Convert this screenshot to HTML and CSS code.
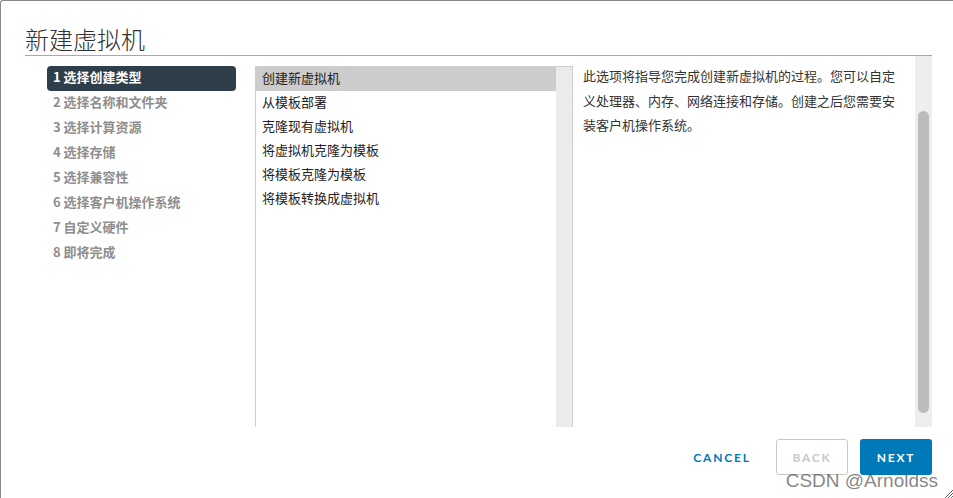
FILE: index.html
```html
<!DOCTYPE html>
<html lang="zh-CN">
<head>
    <meta charset="UTF-8">
    <title>新建虚拟机</title>
    <link rel="stylesheet" href="styles.css">
</head>
<body>
    <div class="wizard">
        <header class="wizard-header">
            <h1>新建虚拟机</h1>
        </header>
        <div class="wizard-body">
            <div class="wizard-content">
                <ul class="steps">
                    <li class="active">1 选择创建类型</li>
                    <li>2 选择名称和文件夹</li>
                    <li>3 选择计算资源</li>
                    <li>4 选择存储</li>
                    <li>5 选择兼容性</li>
                    <li>6 选择客户机操作系统</li>
                    <li>7 自定义硬件</li>
                    <li>8 即将完成</li>
                </ul>
                <div class="type-list">
                    <ul class="options">
                        <li class="selected">创建新虚拟机</li>
                        <li>从模板部署</li>
                        <li>克隆现有虚拟机</li>
                        <li>将虚拟机克隆为模板</li>
                        <li>将模板克隆为模板</li>
                        <li>将模板转换成虚拟机</li>
                    </ul>
                    <div class="list-track"></div>
                </div>
                <p class="desc">此选项将指导您完成创建新虚拟机的过程。您可以自定义处理器、内存、网络连接和存储。创建之后您需要安装客户机操作系统。</p>
            </div>
            <div class="scroll-track"><div class="scroll-thumb"></div></div>
        </div>
        <footer class="wizard-footer">
            <button class="btn btn-link">Cancel</button>
            <button class="btn btn-outline" disabled>Back</button>
            <button class="btn btn-primary">Next</button>
        </footer>
        <span class="watermark">CSDN @Arnoldss</span>
        <svg class="grip" width="9" height="9" viewBox="0 0 9 9">
            <path d="M9 1 L1 9 M9 4 L4 9 M9 7 L7 9" stroke="#666" stroke-width="1"/>
        </svg>
    </div>
</body>
</html>
```

FILE: styles.css
```css
body {
    margin: 0;
    background: #fff;
    font-family: "Noto Sans CJK SC", "Noto Sans", sans-serif;
    color: #333;
}
.wizard {
    position: relative;
    width: 953px;
    height: 498px;
    box-sizing: border-box;
    border-top: 1px solid #8a8a8a;
    border-left: 1px solid #8a8a8a;
    border-top-left-radius: 3px;
    padding: 0 21px 0 24px;
    overflow: hidden;
}
.wizard-header {
    padding-top: 22px;
    border-bottom: 1px solid #a8a8a8;
}
.wizard-header h1 {
    margin: 0;
    font-size: 24px;
    line-height: 32px;
    font-weight: 300;
    color: #313131;
}
.wizard-body {
    display: flex;
    height: 371px;
    overflow: hidden;
}
.wizard-content {
    flex: 1;
    display: flex;
    padding-top: 10px;
}
.steps {
    list-style: none;
    margin: 0 0 0 22px;
    padding: 0;
    width: 189px;
    align-self: flex-start;
}
.steps li {
    height: 25px;
    line-height: 22px;
    padding-left: 6px;
    font-size: 13px;
    font-weight: bold;
    color: #8e8e8e;
    border-radius: 4px;
}
.steps li.active {
    background: #2e3f4b;
    color: #fff;
}
.type-list {
    display: flex;
    width: 318px;
    box-sizing: border-box;
    margin-left: 19px;
    border: 1px solid #cfcfcf;
    border-bottom: none;
}
.options {
    flex: 1;
    list-style: none;
    margin: 0;
    padding: 0;
}
.options li {
    height: 24px;
    line-height: 22px;
    padding-left: 6px;
    font-size: 13px;
    color: #222;
}
.options li.selected {
    background: #cccccc;
}
.list-track {
    width: 16px;
    background: #ebebeb;
}
.desc {
    width: 320px;
    margin: -2px 0 0;
    padding-left: 10px;
    font-size: 13px;
    line-height: 24.5px;
    color: #333;
}
.scroll-track {
    width: 17px;
    background: #eeeeee;
}
.scroll-thumb {
    width: 11px;
    height: 302px;
    margin: 55px 0 0 3px;
    border-radius: 6px;
    background: #bcbcbc;
}
.wizard-footer {
    display: flex;
    justify-content: flex-end;
    align-items: center;
    gap: 12px;
    padding-top: 12px;
}
.btn {
    height: 36px;
    min-width: 72px;
    box-sizing: border-box;
    border-radius: 3px;
    font-family: "Lato", "Open Sans", sans-serif;
    font-size: 12px;
    font-weight: bold;
    letter-spacing: 0.15em;
    text-transform: uppercase;
    padding: 0 12px;
}
.btn-link {
    width: 84px;
    border: none;
    background: transparent;
    color: #0079b8;
}
.btn-outline {
    border: 1px solid #c8c8c8;
    background: #fff;
    color: #c8c8c8;
}
.btn-primary {
    border: none;
    background: #0079b8;
    color: #fff;
}
.watermark {
    position: absolute;
    right: 15px;
    bottom: 6px;
    font-family: "Liberation Sans", sans-serif;
    font-size: 19px;
    color: rgba(80, 80, 80, 0.7);
}
.grip {
    position: absolute;
    right: 0;
    bottom: 0;
}
```
